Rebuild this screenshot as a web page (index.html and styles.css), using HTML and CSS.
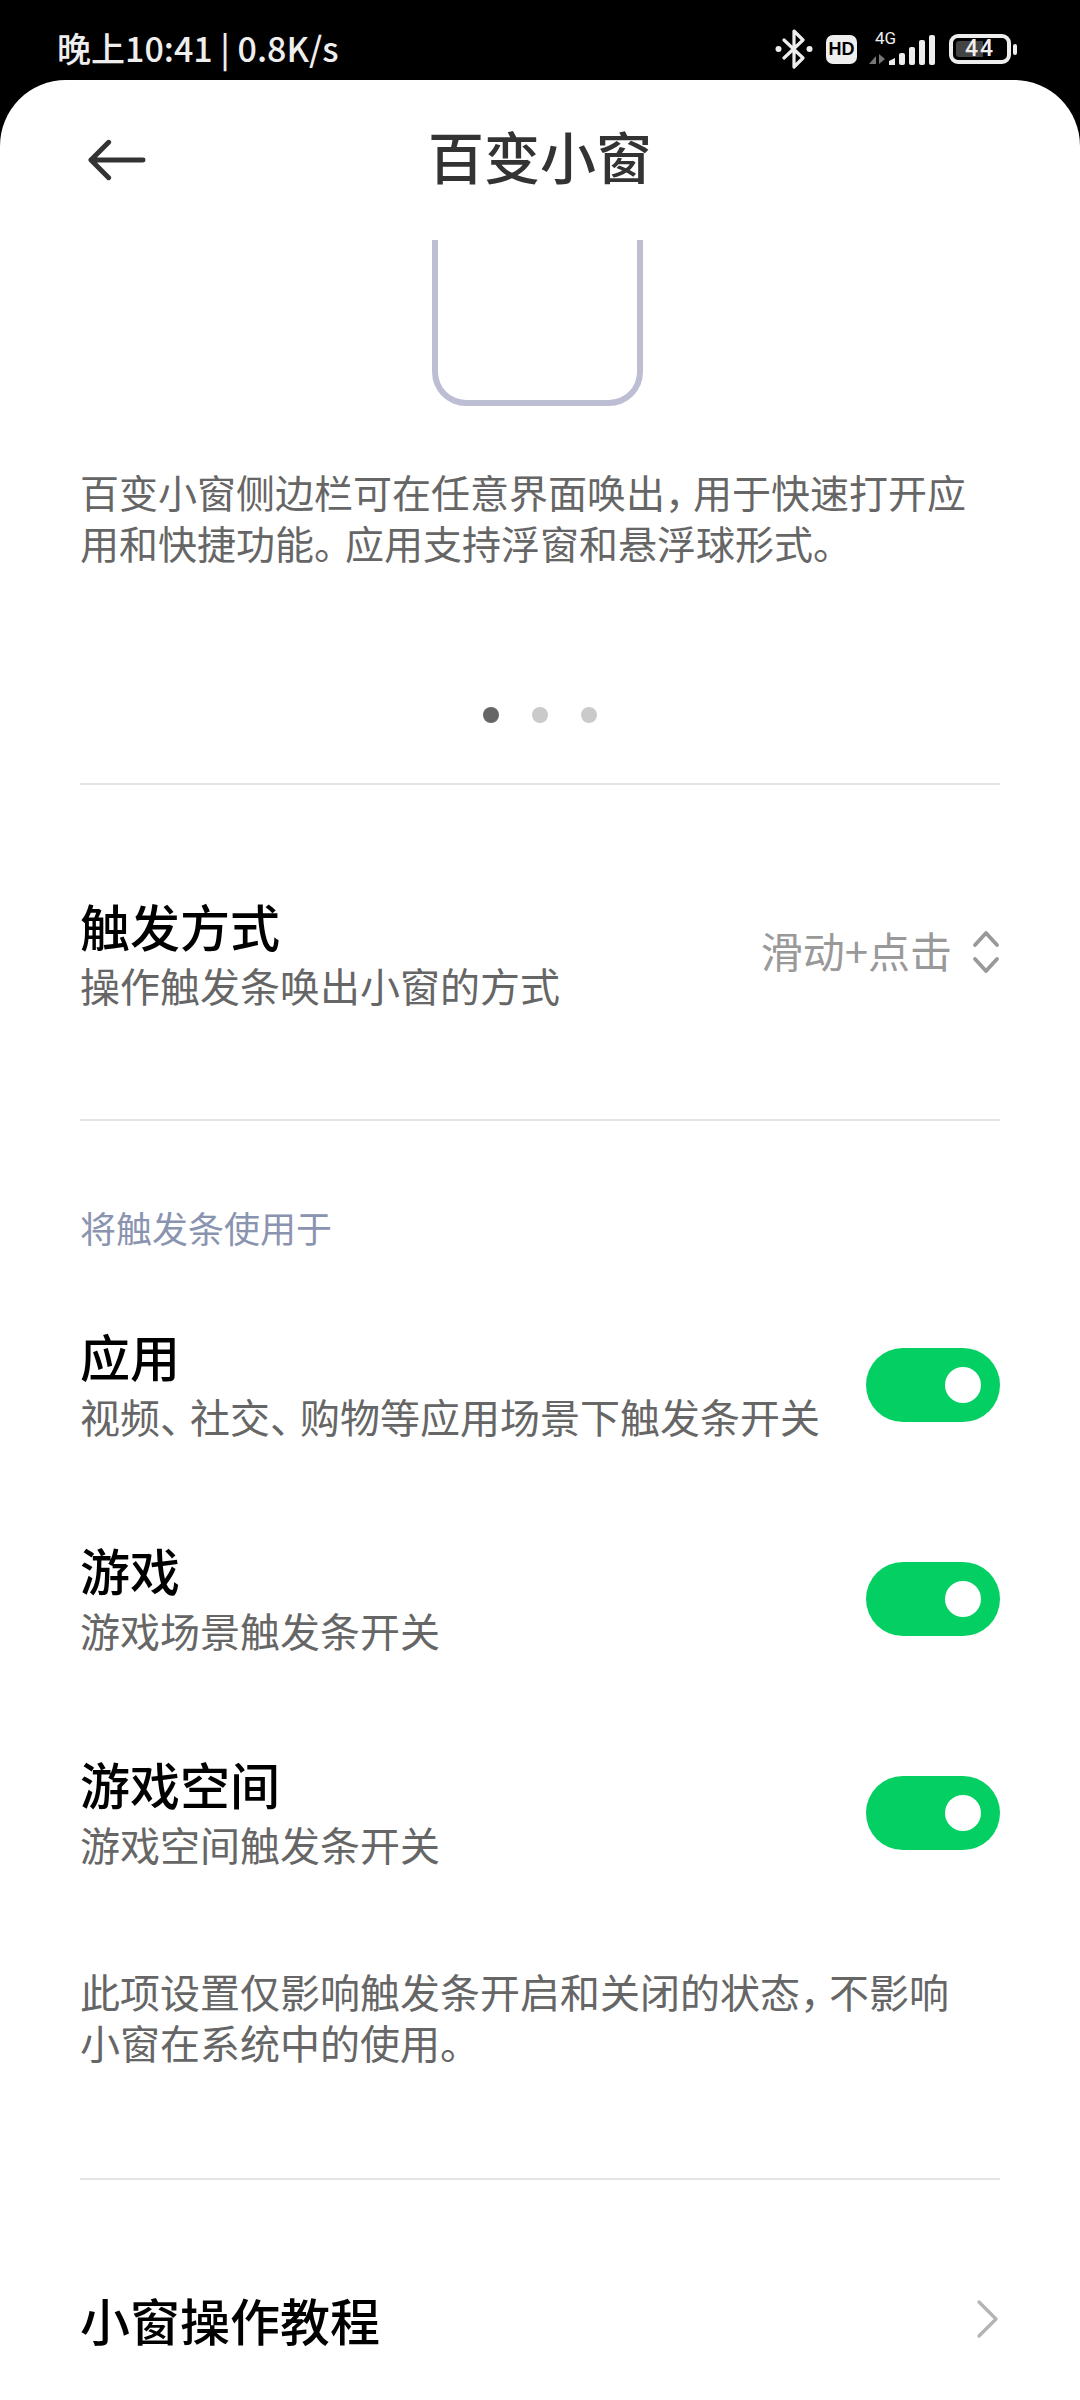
FILE: index.html
```html
<!DOCTYPE html>
<html lang="zh-CN">
<head>
<meta charset="utf-8">
<title>百变小窗</title>
<link rel="stylesheet" href="styles.css">
</head>
<body>
<div class="status">
  <span class="clock">晚上10:41 | 0.8K/s</span>
  <div class="status-icons">
    <svg class="ic-bt" viewBox="0 0 38 40" width="38" height="40"><path d="M9 11 L28 29 L19 38 L19 2 L28 11 L9 29" fill="none" stroke="#eee" stroke-width="3.2" stroke-linejoin="round" stroke-linecap="round"/><circle cx="3.5" cy="20" r="3" fill="#eee"/><circle cx="34.5" cy="20" r="3" fill="#eee"/></svg>
    <span class="hd">HD</span>
    <div class="signal">
      <span class="net">4G</span>
      <svg viewBox="0 0 68 32" width="68" height="32"><path d="M1 30 L8 22 V30 Z M11 20 V30 L17 25 Z" fill="#777"/><path d="M21 31 V27 L27 24 V31 Z" fill="#eee"/><rect x="31" y="19" width="6" height="12" rx="2" fill="#eee"/><rect x="41" y="13" width="6" height="18" rx="2" fill="#eee"/><rect x="51" y="6" width="6" height="25" rx="2" fill="#eee"/><rect x="61" y="1" width="6" height="30" rx="2" fill="#eee"/></svg>
    </div>
    <div class="battery"><span class="battery-fill"></span><span class="battery-num">44</span></div>
    <span class="nub"></span>
  </div>
</div>

<main class="sheet">
  <header class="topbar">
    <svg class="back" viewBox="0 0 60 42" width="59" height="42"><path d="M3 21 H56 M21 3 L3 21 L21 39" fill="none" stroke="#333" stroke-width="5" stroke-linecap="round" stroke-linejoin="round"/></svg>
    <h1 class="title">百变小窗</h1>
  </header>

  <div class="frame"></div>
  <p class="desc intro">百变小窗侧边栏可在任意界面唤出<span class="p">，</span>用于快速打开应<br>用和快捷功能<span class="stop">。</span>应用支持浮窗和悬浮球形式。</p>
  <div class="dots"><i class="dot on"></i><i class="dot"></i><i class="dot"></i></div>
  <hr class="rule">

  <section class="row trigger">
    <div>
      <div class="row-title">触发方式</div>
      <div class="row-sub">操作触发条唤出小窗的方式</div>
    </div>
    <div class="picker">
      <span class="picker-value">滑动+点击</span>
      <svg viewBox="0 0 28 46" width="28" height="46"><path d="M3 16 L14 4 L25 16 M3 30 L14 42 L25 30" fill="none" stroke="#999" stroke-width="3.8" stroke-linecap="round" stroke-linejoin="round"/></svg>
    </div>
  </section>
  <hr class="rule">

  <div class="section-label">将触发条使用于</div>

  <section class="row toggle-row first">
    <div class="toggle-text">
      <div class="row-title">应用</div>
      <div class="row-sub">视频<span class="p">、</span>社交<span class="p">、</span>购物等应用场景下触发条开关</div>
    </div>
    <span class="switch"></span>
  </section>
  <section class="row toggle-row">
    <div class="toggle-text">
      <div class="row-title">游戏</div>
      <div class="row-sub">游戏场景触发条开关</div>
    </div>
    <span class="switch"></span>
  </section>
  <section class="row toggle-row">
    <div class="toggle-text">
      <div class="row-title">游戏空间</div>
      <div class="row-sub">游戏空间触发条开关</div>
    </div>
    <span class="switch"></span>
  </section>

  <p class="desc note">此项设置仅影响触发条开启和关闭的状态<span class="p">，</span>不影响<br>小窗在系统中的使用。</p>
  <hr class="rule">

  <section class="row tutorial">
    <div class="row-title">小窗操作教程</div>
    <svg viewBox="0 0 24 40" width="24" height="40"><path d="M3 3 L20 20 L3 37" fill="none" stroke="#b3b3b3" stroke-width="3.2" stroke-linecap="round" stroke-linejoin="round"/></svg>
  </section>
</main>
</body>
</html>
```
FILE: styles.css
```css
* { box-sizing: border-box; }
html, body { margin: 0; padding: 0; }
body {
  width: 1080px;
  height: 2400px;
  overflow: hidden;
  background: #000;
  font-family: "Noto Sans CJK SC", "Noto Sans", sans-serif;
}
.status {
  height: 80px;
  padding: 18px 63px 0 57px;
  display: flex;
  align-items: center;
  justify-content: space-between;
  color: #eee;
}
.clock { font-size: 34px; font-weight: 500; line-height: 40px; margin-top: -2px; }
.status-icons { display: flex; align-items: center; }
.ic-bt { margin-right: 13px; }
.hd {
  width: 31px; height: 29px; border-radius: 7px;
  background: #eee; color: #000;
  font: 700 18px/29px "Liberation Sans", sans-serif;
  text-align: center;
  margin-right: 11px;
}
.signal { position: relative; width: 68px; height: 32px; margin-right: 13px; margin-top: 2px; }
.net { position: absolute; left: 7px; top: -4px; font: 400 17px/17px "Roboto", sans-serif; color: #eee; }
.signal svg { display: block; }
.battery {
  position: relative;
  width: 62px; height: 30px;
  border: 4px solid #eee; border-radius: 9px;
  padding: 3px;
}
.battery-fill { display: block; width: 27px; height: 100%; background: #444; border-radius: 3px 0 0 3px; }
.battery-num {
  position: absolute; left: 0; right: 0; top: 0; bottom: 0;
  text-align: center;
  font: 500 23px/22px "Roboto", sans-serif;
  letter-spacing: 2px;
  color: #eee;
}
.nub { width: 4px; height: 11px; margin-left: 2px; background: #eee; border-radius: 2px; }

.sheet {
  height: 2320px;
  background: #fff;
  border-radius: 66px 66px 0 0;
  padding: 0 80px;
  overflow: hidden;
}
.topbar { height: 160px; display: flex; align-items: center; justify-content: center; position: relative; }
.back { position: absolute; left: 8px; top: 59px; }
.title { margin: -10px 0 0; font-size: 56px; line-height: 64px; font-weight: 500; color: #333; }

.frame {
  width: 211px; height: 166px;
  margin-left: 352px;
  border: 6px solid #bdbdd3;
  border-top: 0;
  border-radius: 0 0 34px 34px;
}
.desc { margin: 0; font-size: 40px; line-height: 51px; color: #666; }
.desc.intro { font-size: 39px; margin-top: 60px; height: 102px; }
.p { letter-spacing: -11px; }
.stop { letter-spacing: -8px; }
.dots { display: flex; justify-content: center; gap: 33px; margin-top: 139px; }
.dot { width: 16px; height: 16px; border-radius: 50%; background: #cacaca; }
.dot.on { background: #666; }
.rule { margin: 0; border: 0; height: 2px; background: #e4e4e4; }
.dots + .rule { margin-top: 60px; }

.row { display: flex; align-items: center; justify-content: space-between; }
.row-title { font-size: 50px; line-height: 60px; font-weight: 500; color: #000; }
.row-sub { font-size: 40px; line-height: 50px; color: #666; margin-top: 5px; }
.row-sub .p { letter-spacing: -10px; }
.trigger { height: 334px; }
.picker { display: flex; align-items: center; gap: 20px; font-size: 42px; color: #999; }
.picker-value { margin-top: -5px; }
.picker svg { display: block; }
.section-label { font-size: 36px; line-height: 44px; color: #8a94b0; margin-top: 84px; }
.toggle-row { height: 214px; }
.toggle-row.first { margin-top: 29px; }
.toggle-text { padding-bottom: 4px; }
.toggle-text .row-sub { margin-top: 6px; }
.switch { position: relative; display: block; width: 134px; height: 74px; border-radius: 37px; background: #03cf62; flex: none; }
.switch::after { content: ""; position: absolute; right: 19px; top: 19px; width: 36px; height: 36px; border-radius: 50%; background: #fff; }
.desc.note { margin-top: 46px; }
.note + .rule { margin-top: 110px; }
.tutorial { height: 278px; }
```
